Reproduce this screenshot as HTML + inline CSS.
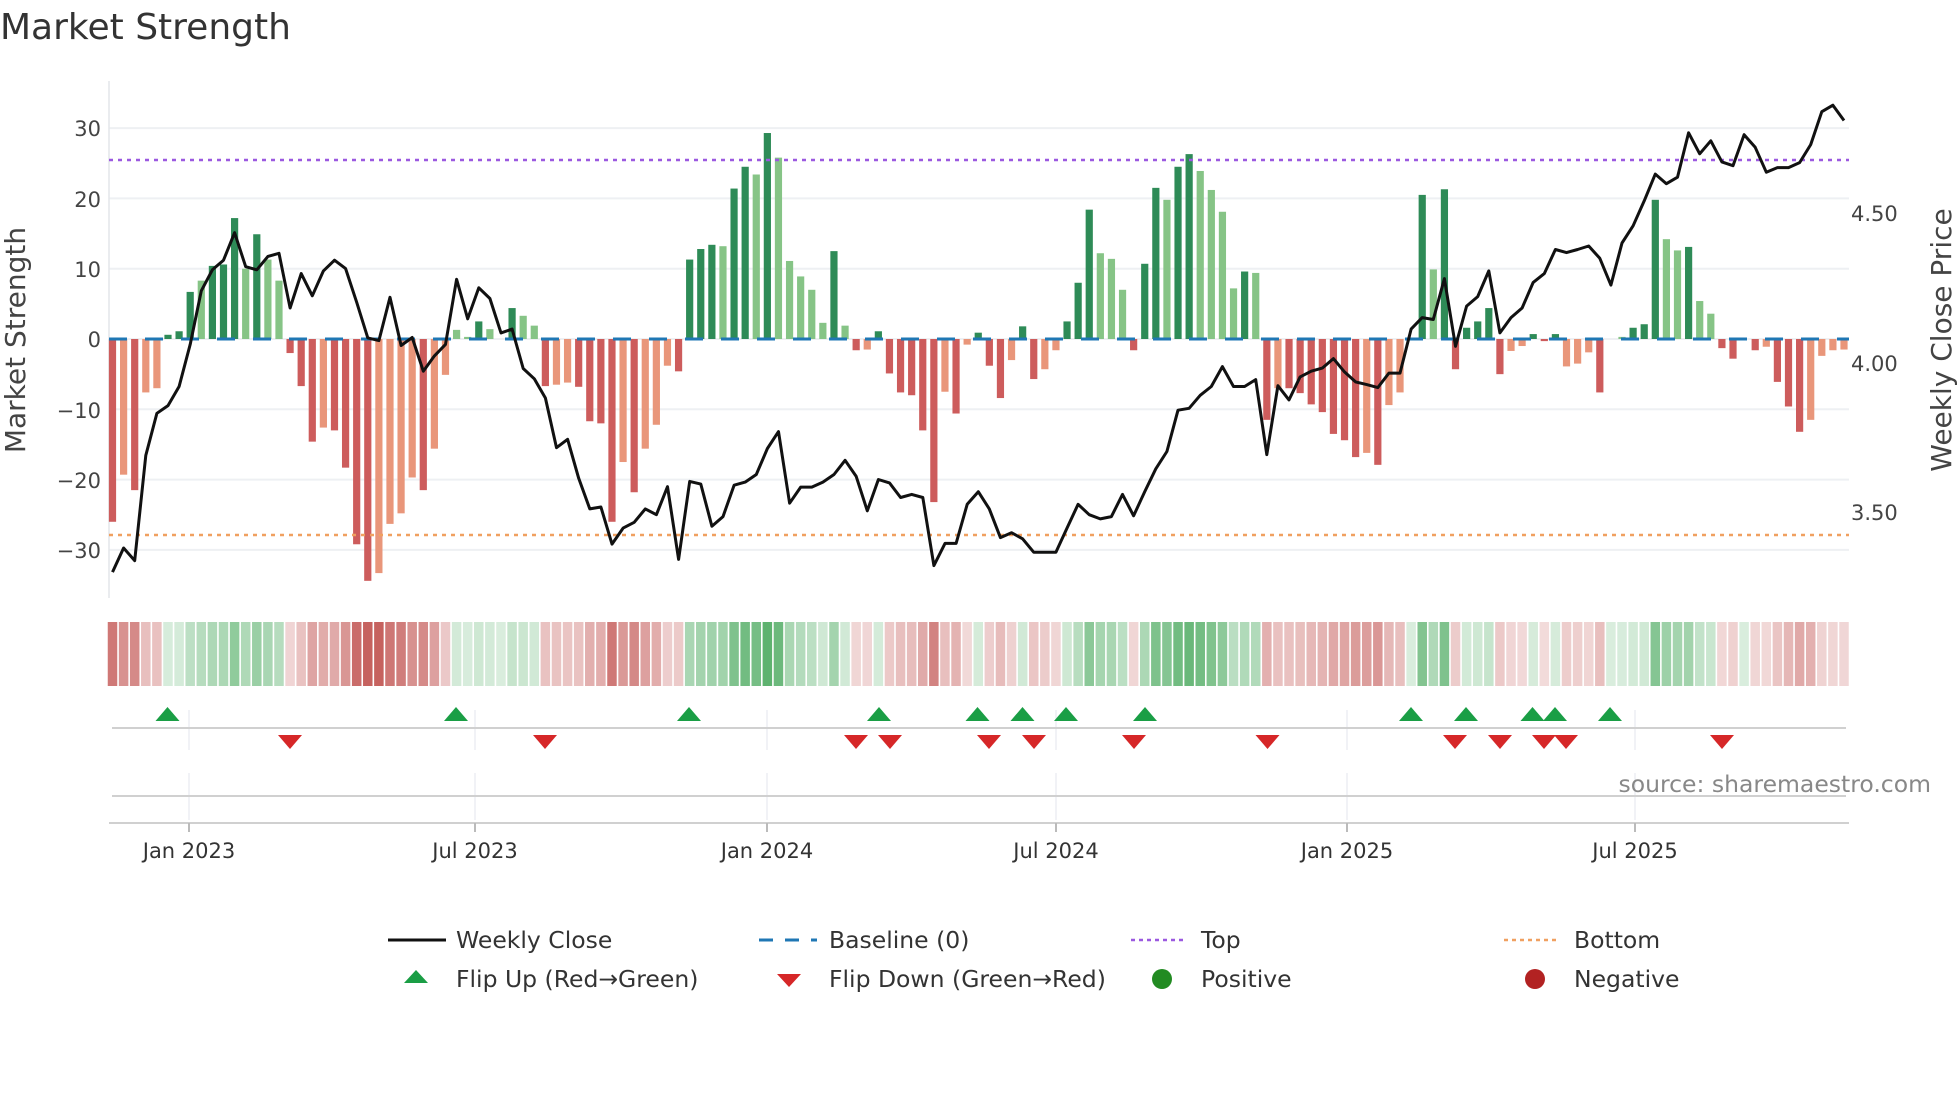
<!DOCTYPE html>
<html><head><meta charset="utf-8">
<style>
html,body{margin:0;padding:0;background:#fff;}
svg{display:block;font-family:"DejaVu Sans","Liberation Sans",sans-serif;}
</style></head>
<body>
<svg id="s" width="1960" height="1102" viewBox="0 0 1960 1102" xmlns="http://www.w3.org/2000/svg">
<text x="0" y="39" font-size="36" fill="#333">Market Strength</text>
<g id="grid"></g>
<line x1="109" y1="81" x2="109" y2="598" stroke="#e4e6ea" stroke-width="1.5"/>
<g fill="#444" font-size="21" text-anchor="end">
<text x="101" y="136">30</text><text x="101" y="207">20</text><text x="101" y="277">10</text>
<text x="101" y="347">0</text><text x="101" y="418">−10</text><text x="101" y="488">−20</text><text x="101" y="558">−30</text>
</g>
<g fill="#444" font-size="21">
<text x="1851" y="221">4.50</text><text x="1851" y="371">4.00</text><text x="1851" y="520">3.50</text>
</g>
<text transform="translate(25,340) rotate(-90)" font-size="28" fill="#444" text-anchor="middle">Market Strength</text>
<text transform="translate(1951,340) rotate(-90)" font-size="28" fill="#444" text-anchor="middle">Weekly Close Price</text>
<g id="bars"></g>
<line x1="109" y1="160" x2="1849" y2="160" stroke="#9b59e0" stroke-width="2.5" stroke-dasharray="4,5"/>
<line x1="109" y1="535" x2="1849" y2="535" stroke="#f0a060" stroke-width="2.5" stroke-dasharray="4,5"/>
<g id="base"></g>
<polyline id="price" fill="none" stroke="#111" stroke-width="3" stroke-linejoin="round"/>
<g id="strip"></g>
<g stroke="#eceef2" stroke-width="1.5">
<line x1="189" y1="710" x2="189" y2="750"/><line x1="475" y1="710" x2="475" y2="750"/><line x1="767" y1="710" x2="767" y2="750"/><line x1="1056" y1="710" x2="1056" y2="750"/><line x1="1347" y1="710" x2="1347" y2="750"/><line x1="1635" y1="710" x2="1635" y2="750"/>
<line x1="189" y1="773" x2="189" y2="820"/><line x1="475" y1="773" x2="475" y2="820"/><line x1="767" y1="773" x2="767" y2="820"/><line x1="1056" y1="773" x2="1056" y2="820"/><line x1="1347" y1="773" x2="1347" y2="820"/><line x1="1635" y1="773" x2="1635" y2="820"/>
</g>
<line x1="112" y1="728" x2="1846" y2="728" stroke="#d0d0d0" stroke-width="2"/>
<line x1="112" y1="796" x2="1846" y2="796" stroke="#d0d0d0" stroke-width="2"/>
<line x1="109" y1="823" x2="1849" y2="823" stroke="#d0d0d0" stroke-width="2"/>
<g stroke="#bbb" stroke-width="2">
<line x1="189" y1="823" x2="189" y2="832"/><line x1="475" y1="823" x2="475" y2="832"/><line x1="767" y1="823" x2="767" y2="832"/><line x1="1056" y1="823" x2="1056" y2="832"/><line x1="1347" y1="823" x2="1347" y2="832"/><line x1="1635" y1="823" x2="1635" y2="832"/>
</g>
<g id="flips"></g>
<text x="1931" y="792" font-size="23.5" fill="#888" text-anchor="end">source: sharemaestro.com</text>
<g fill="#333" font-size="21" text-anchor="middle">
<text x="189" y="858">Jan 2023</text><text x="475" y="858">Jul 2023</text><text x="767" y="858">Jan 2024</text>
<text x="1056" y="858">Jul 2024</text><text x="1347" y="858">Jan 2025</text><text x="1635" y="858">Jul 2025</text>
</g>
<g font-size="23.5" fill="#333">
<line x1="388" y1="940" x2="446" y2="940" stroke="#111" stroke-width="3"/>
<text x="456" y="948">Weekly Close</text>
<polygon points="416,970 428,983 404,983" fill="#1a9e45"/>
<text x="456" y="987">Flip Up (Red→Green)</text>
<line x1="759" y1="940" x2="817" y2="940" stroke="#1f77b4" stroke-width="3" stroke-dasharray="14,12"/>
<text x="829" y="948">Baseline (0)</text>
<polygon points="777,974 801,974 789,987" fill="#d62728"/>
<text x="829" y="987">Flip Down (Green→Red)</text>
<line x1="1131" y1="940" x2="1187" y2="940" stroke="#9b59e0" stroke-width="2.5" stroke-dasharray="4,4"/>
<text x="1201" y="948">Top</text>
<circle cx="1162" cy="979" r="10" fill="#228b22"/>
<text x="1201" y="987">Positive</text>
<line x1="1504" y1="940" x2="1560" y2="940" stroke="#f0a060" stroke-width="2.5" stroke-dasharray="4,4"/>
<text x="1574" y="948">Bottom</text>
<circle cx="1535" cy="979" r="10" fill="#b22222"/>
<text x="1574" y="987">Negative</text>
</g>
</svg>
<script>
var NS="http://www.w3.org/2000/svg";
function el(t,a,p){var e=document.createElementNS(NS,t);for(var k in a)e.setAttribute(k,a[k]);document.getElementById(p).appendChild(e);return e;}
var Y0=339,U=7.03;
[30,20,10,0,-10,-20,-30].forEach(function(v){el('line',{x1:109,x2:1849,y1:Y0-v*U,y2:Y0-v*U,stroke:'#eef0f3','stroke-width':2},'grid');});
var b1="-26R -19.3S -21.5R -7.6S -7S 0.6D 1.1D 6.7D 8.3L 10.4D 10.6D 17.2D 10L 14.9D 11.3L 8.3L -2R -6.7R -14.6R -12.6S -13R -18.3R -29.2R -34.4R -33.3S -26.3S -24.8S -19.7S -21.5R -15.6S -5.1S 1.3L 0.3L 2.5D 1.4L 0L 4.4D 3.3L 1.9L -6.7R -6.5S -6.2S -6.8R -11.7R -12R -26R -17.5S -21.8R -15.6S -12.2S -3.8S -4.6R 11.3D 12.8D 13.4D 13.2L 21.4D 24.5D 23.4L 29.3D 25.8L 11.1L 8.9L 7L 2.3L 12.5D 1.9L -1.6R -1.5S 1.1D -4.9R -7.6R -8R -13R -23.2R -7.5S -10.6R -0.8S 0.9D";
var b2="-3.8R -8.4R -3S 1.8D -5.7R -4.3S -1.6S 2.5D 8D 18.4D 12.2L 11.4L 7L -1.6R 10.7D 21.5D 19.8L 24.5D 26.3D 23.9L 21.2L 18.1L 7.2L 9.6D 9.4L -11.5R -7S -7R -7.7R -9.3R -10.4R -13.5R -14.4R -16.8R -16.2S -17.9R -9.4S -7.6S 0D 20.5D 9.9L 21.3D -4.3R 1.6D 2.5D 4.4D -5R -1.7S -1S 0.7D -0.3R 0.7D -3.9S -3.5S -1.9S -7.6R 0L 0.3L 1.6D 2.1D 19.8D 14.2L 12.6L 13.1D 5.4L 3.6L -1.3R -2.8R 0L -1.6R -1.1S -6.1R -9.6R -13.2R -11.5S -2.4S -1.6S -1.5S";
var bars=(b1+" "+b2).split(" ").map(function(s){return [parseFloat(s),s.slice(-1)];});
var col={D:'#2e8b57',L:'#86c486',R:'#cd5c5c',S:'#e9967a'};
var N=bars.length,X0=112.5,DX=(1844-112.5)/(N-1);
bars.forEach(function(b,i){var x=X0+i*DX,v=b[0],h=Math.abs(v)*U;
 if(h>0.5)el('rect',{x:x-3.6,y:v>0?Y0-h:Y0,width:7.2,height:h,fill:col[b[1]]},'bars');
 var t=Math.min(1,Math.abs(v)/32)*0.7+0.2,c=v>=0?[63,164,84]:[192,80,77];
 var rgb=c.map(function(k){return Math.round(255-(255-k)*t);});
 el('rect',{x:x-DX/2+0.8,y:622,width:DX-1.6,height:64,fill:'rgb('+rgb.join(',')+')'},'strip');
});
el('line',{x1:109,x2:1849,y1:Y0,y2:Y0,stroke:'#1f77b4','stroke-width':3,'stroke-dasharray':'18,18'},'base');
var p1="1495 1432 1465 1190 1080 1060 1010 900 760 705 680 608 697 705 670 662 805 715 773 708 680 702 790 883 890 777 903 882 970 930 900 730 833 752 780 870 860 963 990 1040 1170 1148 1250 1330 1325 1422 1380 1365 1330 1345 1272 1462 1258 1265 1375 1350 1268 1260 1240 1172 1128 1315 1273 1273 1260 1240 1203 1245 1335 1253 1262 1300 1292 1300 1478 1420 1420 1318 1285";
var p2="1330 1405 1392 1408 1443 1443 1443 1380 1318 1345 1356 1350 1292 1348 1285 1225 1180 1072 1067 1033 1010 958 1010 1010 992 1188 1008 1045 985 970 962 937 972 998 1005 1013 975 975 860 830 835 728 905 800 775 708 870 830 805 738 715 652 660 652 643 675 745 635 590 525 455 480 463 347 402 368 423 433 352 385 450 438 438 425 378 292 275 315";
var ps=(p1+" "+p2).split(" ").map(Number);
document.getElementById('price').setAttribute('points',ps.map(function(y,i){return (X0+i*DX*(N-1)/(ps.length-1)).toFixed(1)+','+(y/2.6133).toFixed(1);}).join(' '));
[167.5,456,689,879,977.5,1022.5,1066,1145,1411,1466,1532.5,1555,1610].forEach(function(x){el('polygon',{points:(x)+',707 '+(x+12)+',721 '+(x-12)+',721',fill:'#1a9e45'},'flips');});
[290,545,856,890,989,1034,1134,1267.5,1455,1500,1544,1566,1722].forEach(function(x){el('polygon',{points:(x-12)+',735 '+(x+12)+',735 '+x+',749',fill:'#d62728'},'flips');});
</script>
</body></html>
